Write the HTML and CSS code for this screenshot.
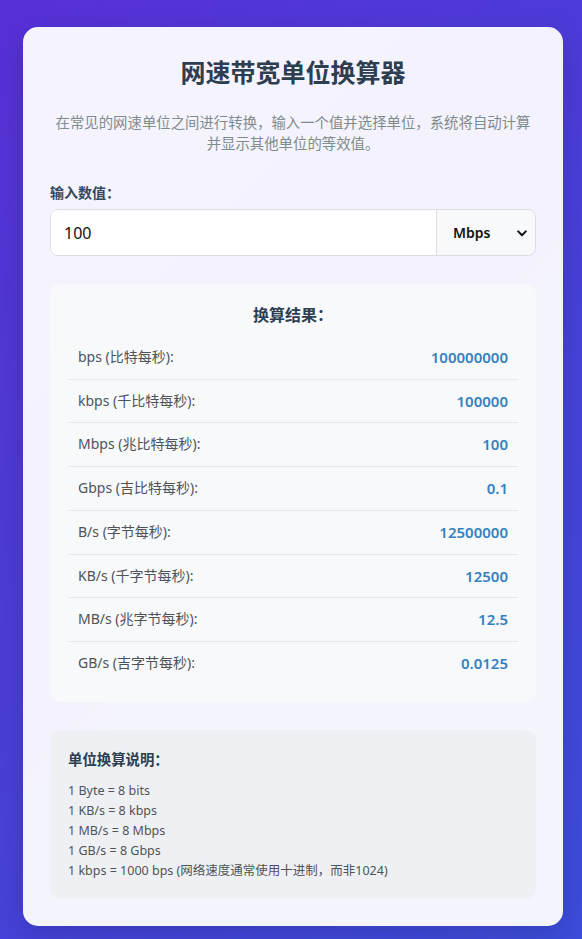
FILE: index.html
```html
<!DOCTYPE html>
<html lang="zh-CN">
<head>
  <meta charset="UTF-8">
  <meta name="viewport" content="width=device-width, initial-scale=1">
  <title>网速带宽单位换算器</title>
  <link rel="stylesheet" href="styles.css">
</head>
<body>
  <div class="converter">
    <h1>网速带宽单位换算器</h1>
    <p class="intro">在常见的网速单位之间进行转换，输入一个值并选择单位，系统将自动计算并显示其他单位的等效值。</p>

    <label class="field-label" for="speedValue">输入数值：</label>
    <div class="input-group">
      <input type="number" id="speedValue" value="100">
      <div class="select-wrap">
        <select id="speedUnit">
          <option>bps</option>
          <option>kbps</option>
          <option selected>Mbps</option>
          <option>Gbps</option>
          <option>B/s</option>
          <option>KB/s</option>
          <option>MB/s</option>
          <option>GB/s</option>
        </select>
        <svg class="chevron" width="10" height="7" viewBox="0 0 10 7"><path d="M1.2 1.4L5 5.2l3.8-3.8" fill="none" stroke="#111" stroke-width="2" stroke-linecap="round" stroke-linejoin="round"/></svg>
      </div>
    </div>

    <div class="results">
      <h2>换算结果：</h2>
      <div class="result-row"><span class="unit">bps (比特每秒):</span><span class="value">100000000</span></div>
      <div class="result-row"><span class="unit">kbps (千比特每秒):</span><span class="value">100000</span></div>
      <div class="result-row"><span class="unit">Mbps (兆比特每秒):</span><span class="value">100</span></div>
      <div class="result-row"><span class="unit">Gbps (吉比特每秒):</span><span class="value">0.1</span></div>
      <div class="result-row"><span class="unit">B/s (字节每秒):</span><span class="value">12500000</span></div>
      <div class="result-row"><span class="unit">KB/s (千字节每秒):</span><span class="value">12500</span></div>
      <div class="result-row"><span class="unit">MB/s (兆字节每秒):</span><span class="value">12.5</span></div>
      <div class="result-row"><span class="unit">GB/s (吉字节每秒):</span><span class="value">0.0125</span></div>
    </div>

    <div class="notes">
      <h3>单位换算说明：</h3>
      <p>1 Byte = 8 bits</p>
      <p>1 KB/s = 8 kbps</p>
      <p>1 MB/s = 8 Mbps</p>
      <p>1 GB/s = 8 Gbps</p>
      <p>1 kbps = 1000 bps (网络速度通常使用十进制，而非1024)</p>
    </div>
  </div>
</body>
</html>
```

FILE: styles.css
```css
* {
  margin: 0;
  padding: 0;
  box-sizing: border-box;
}

body {
  font-family: "Segoe UI", "Noto Sans", "Noto Sans CJK SC", sans-serif;
  background: linear-gradient(135deg, #5730d6, #3c4ddc);
  min-height: 100vh;
  padding: 27px 0 15px 23px;
}

.converter {
  width: 540px;
  background: rgba(255, 255, 255, 0.94);
  border-radius: 15px;
  padding: 27px;
  box-shadow: 0 10px 30px rgba(0, 0, 0, 0.15);
}

.converter h1 {
  text-align: center;
  font-size: 25px;
  line-height: 36px;
  font-weight: 700;
  color: #2c3e50;
  margin-bottom: 22px;
}

.intro {
  text-align: center;
  font-size: 14.4px;
  line-height: 21px;
  color: #7f8c8d;
  margin-bottom: 29px;
}

.field-label {
  display: block;
  font-size: 14px;
  line-height: 20px;
  font-weight: 700;
  color: #34495e;
  margin-bottom: 6px;
}

.input-group {
  display: flex;
  height: 47px;
  border: 1px solid #dcdde1;
  border-radius: 8px;
  overflow: hidden;
  background: #fff;
  margin-bottom: 28px;
}

.input-group input {
  flex: 1;
  min-width: 0;
  border: none;
  outline: none;
  padding: 0 13px;
  font-family: inherit;
  font-size: 16px;
  color: #111;
  background: #fff;
  -moz-appearance: textfield;
}

.input-group input::-webkit-outer-spin-button,
.input-group input::-webkit-inner-spin-button {
  -webkit-appearance: none;
}

.select-wrap {
  position: relative;
  width: 99px;
  border-left: 1px solid #dcdde1;
  background: #f8f9fa;
}

.select-wrap select {
  -webkit-appearance: none;
  appearance: none;
  width: 100%;
  height: 100%;
  border: none;
  outline: none;
  background: transparent;
  padding: 0 0 0 16px;
  font-family: inherit;
  font-size: 14px;
  font-weight: 600;
  color: #111;
}

.chevron {
  position: absolute;
  right: 8px;
  top: 20px;
  pointer-events: none;
}

.results {
  background: #f8f9fb;
  border-radius: 10px;
  padding: 20px 18px 17px;
  margin-bottom: 28px;
}

.results h2 {
  text-align: center;
  font-size: 16px;
  line-height: 22px;
  font-weight: 700;
  color: #2c3e50;
  margin-bottom: 10px;
}

.result-row {
  display: flex;
  justify-content: space-between;
  align-items: center;
  padding: 12px 10px;
  border-bottom: 1px solid #e6e8ec;
  line-height: 18.7px;
}

.result-row:last-child {
  border-bottom: none;
}

.result-row .unit {
  font-size: 14px;
  color: #4f5358;
}

.result-row .value {
  font-size: 15px;
  font-weight: 600;
  color: #3481c0;
}

.notes {
  background: #eff0f4;
  border-radius: 10px;
  padding: 18px;
}

.notes h3 {
  font-size: 14.4px;
  line-height: 24px;
  font-weight: 700;
  color: #2c3e50;
  margin-bottom: 9px;
}

.notes p {
  font-size: 12.5px;
  line-height: 20px;
  color: #4f5358;
}
```
